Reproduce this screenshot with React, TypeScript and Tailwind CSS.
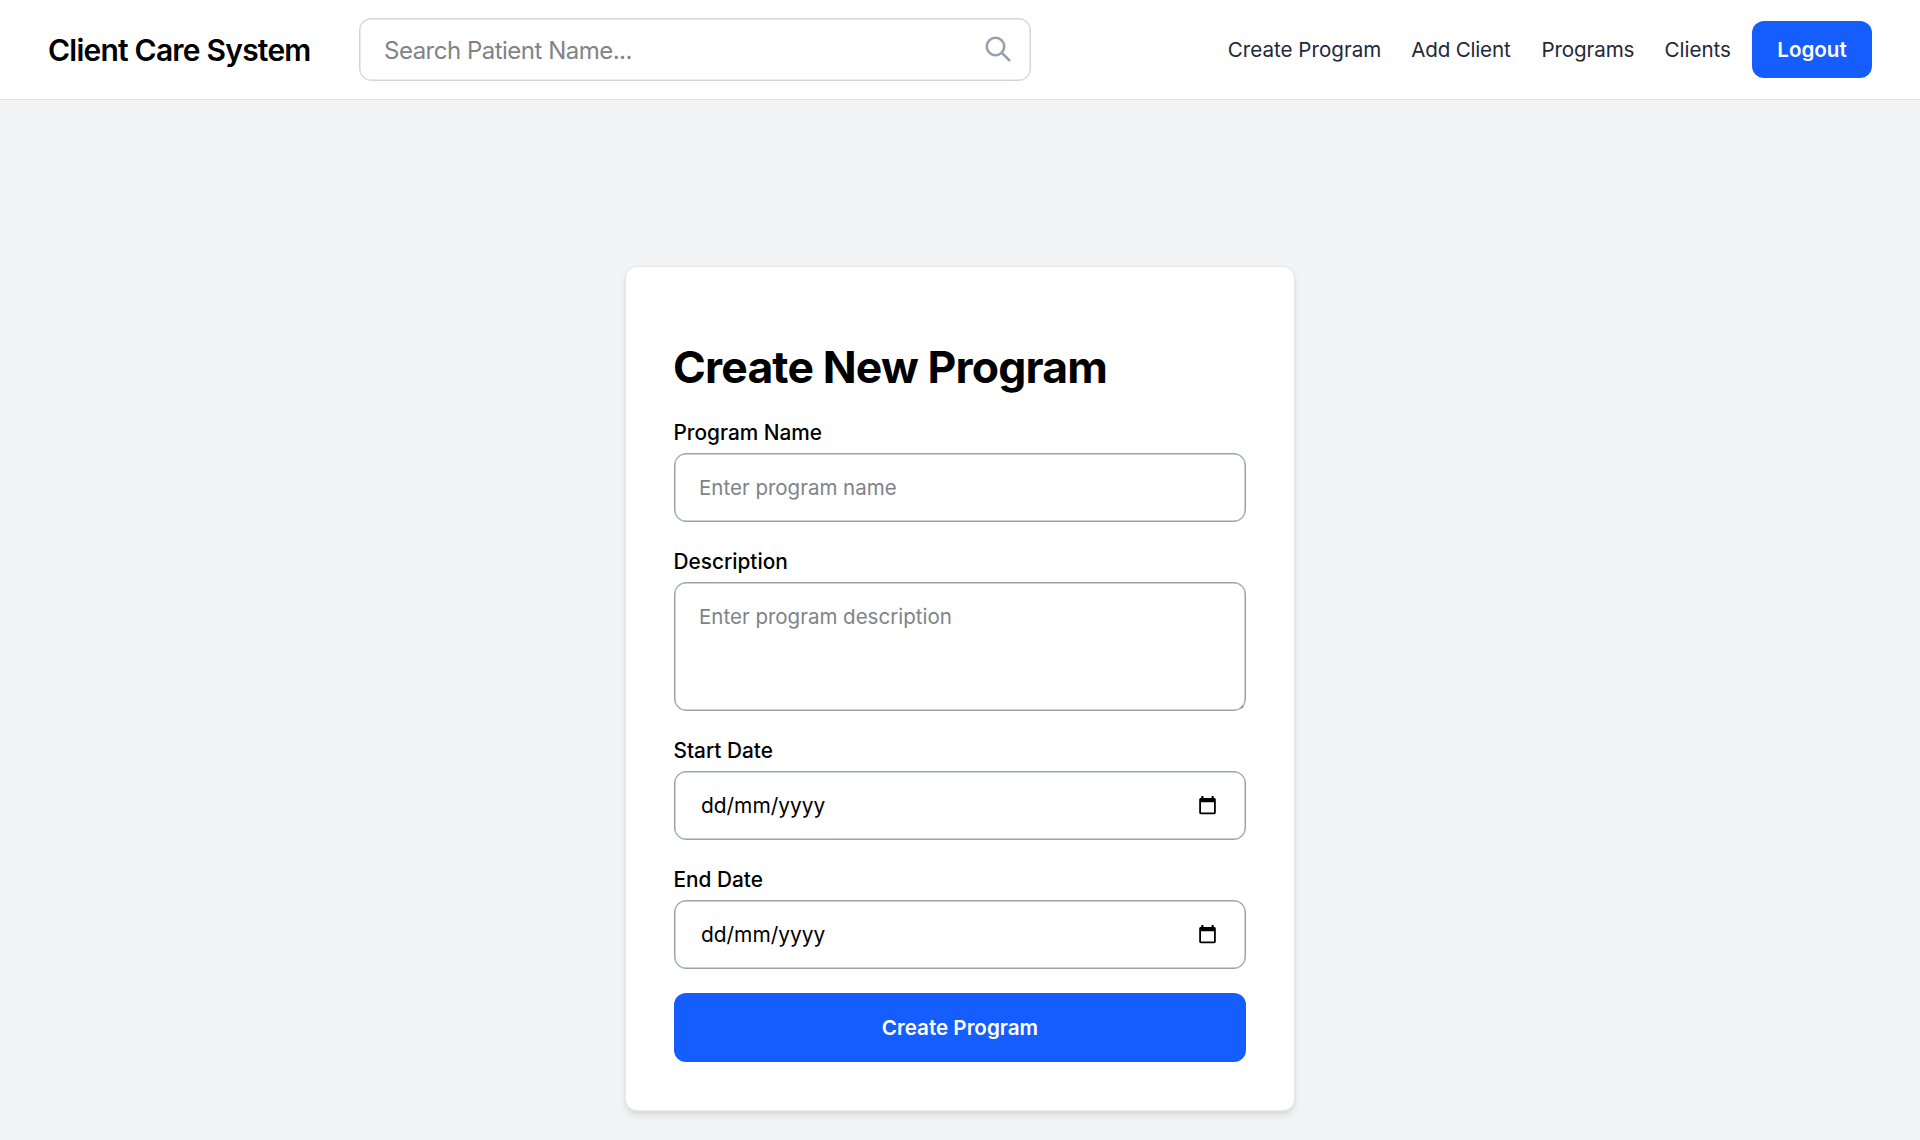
import type { ReactNode } from "react";

function CalendarIcon() {
  return (
    <svg className="h-[19px] w-[17px]" viewBox="0 0 17 19" fill="none" aria-hidden="true">
      <path
        fillRule="evenodd"
        fill="#000"
        d="M2.3 0h2.1v2h8.2v-2h2.1v2h0.5c0.9 0 1.6 0.7 1.6 1.6v13c0 0.9-0.7 1.6-1.6 1.6H1.8c-0.9 0-1.6-0.7-1.6-1.6V3.6c0-0.9 0.7-1.6 1.6-1.6h0.5zM2 6.2v10.3h13V6.2z"
      />
    </svg>
  );
}

function SearchIcon() {
  return (
    <svg
      className="h-[30px] w-[30px] shrink-0 text-gray-400"
      viewBox="0 0 24 24"
      fill="none"
      stroke="currentColor"
      strokeWidth="2.1"
      strokeLinecap="round"
      strokeLinejoin="round"
      aria-hidden="true"
    >
      <path d="M21 21l-6-6m2-5a7 7 0 11-14 0 7 7 0 0114 0z" />
    </svg>
  );
}

function Field({ label, children }: { label: string; children: ReactNode }) {
  return (
    <label className="mb-[25px] block">
      <span className="mb-1.5 -ml-[0.5px] block text-[20.8px] leading-[29px] font-medium">{label}</span>
      {children}
    </label>
  );
}

function DateBox() {
  return (
    <div className="flex h-[69px] items-center justify-between rounded-xl border border-gray-400 pr-[29px] pl-[26px] shadow-[inset_0_0_0_0.5px_#99a1af]">
      <span className="text-[20.9px]">dd/mm/yyyy</span>
      <CalendarIcon />
    </div>
  );
}

export default function App() {
  return (
    <div className="flex h-[1140px] flex-col overflow-hidden bg-gray-100 font-['Inter',sans-serif] text-black">
      <header className="flex h-[100px] shrink-0 items-center border-b border-[#dfe1e6] bg-white px-12">
        <h1 className="mt-0.5 w-[311px] text-[30px] font-semibold tracking-[-0.78px] whitespace-nowrap">
          Client Care System
        </h1>
        <div className="flex h-[63px] w-[672px] items-center rounded-xl border border-gray-300 pr-[17px] pl-6 shadow-[inset_0_0_0_0.5px_#d1d5dc]">
          <input
            className="mt-0.5 min-w-0 flex-1 text-[24px] tracking-[-0.5px] outline-none placeholder:text-[#808388]"
            placeholder="Search Patient Name..."
          />
          <div className="-mt-px">
            <SearchIcon />
          </div>
        </div>
        <nav className="ml-auto flex items-center text-[20.6px] whitespace-nowrap text-gray-800">
          <a className="mt-0.5 mr-[30px]">Create Program</a>
          <a className="mt-0.5 mr-[31px] tracking-[-0.2px]">Add Client</a>
          <a className="mt-0.5 mr-[30px] tracking-[-0.1px]">Programs</a>
          <a className="mt-0.5 mr-[21px]">Clients</a>
          <button className="h-[57px] w-[120px] rounded-xl bg-[#155dfc] pt-px font-semibold text-white">Logout</button>
        </nav>
      </header>

      <main className="flex justify-center pt-[166px]">
        <form className="h-[845px] w-[670px] rounded-xl border border-gray-200 bg-white px-12 pt-[74px] shadow-[0_0_0_0.5px_#e5e7eb,0_5px_8px_-1px_rgba(0,0,0,0.1),0_2px_5px_-2px_rgba(0,0,0,0.1)]">
          <h2 className="mb-6 -ml-px text-[44.5px] leading-[53px] font-bold tracking-[-0.84px]">Create New Program</h2>
          <Field label="Program Name">
            <input
              className="block h-[69px] w-full rounded-xl border border-gray-400 px-6 text-[20.5px] shadow-[inset_0_0_0_0.5px_#99a1af] outline-none placeholder:text-[#808388]"
              placeholder="Enter program name"
            />
          </Field>
          <Field label="Description">
            <div className="relative">
              <textarea
                className="block h-[129px] w-full resize-none rounded-xl border border-gray-400 px-6 py-[19px] text-[20.5px] leading-[30px] shadow-[inset_0_0_0_0.5px_#99a1af] outline-none placeholder:text-[#808388]"
                placeholder="Enter program description"
              />
              <svg className="absolute right-[2px] bottom-[2px] h-[4px] w-[4px]" viewBox="0 0 4 4" aria-hidden="true">
                <path d="M1 3.5L3.5 1" stroke="#555" strokeWidth="1" />
              </svg>
            </div>
          </Field>
          <Field label="Start Date">
            <DateBox />
          </Field>
          <Field label="End Date">
            <DateBox />
          </Field>
          <button className="-mt-px block h-[69px] w-full rounded-xl bg-[#155dfc] pt-0.5 text-[20.6px] font-semibold text-white">
            Create Program
          </button>
        </form>
      </main>
    </div>
  );
}
